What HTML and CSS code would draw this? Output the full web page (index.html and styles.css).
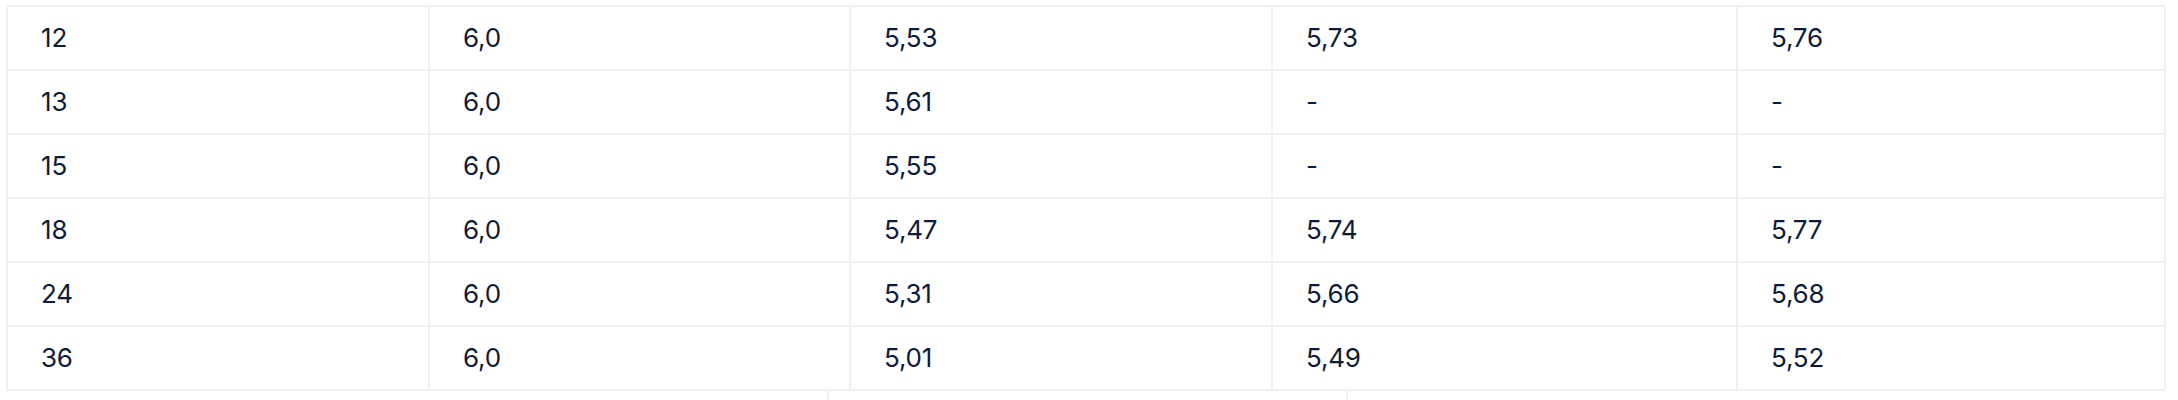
FILE: index.html
```html
<!DOCTYPE html>
<html lang="ru">
<head>
<meta charset="utf-8">
<link rel="stylesheet" href="styles.css">
<title>Table</title>
</head>
<body>
<div class="wrap">
  <table class="rates">
    <colgroup>
      <col class="c1"><col class="c2"><col class="c3"><col class="c4"><col class="c5">
    </colgroup>
    <tbody>
      <tr><td>12</td><td>6,0</td><td>5,53</td><td>5,73</td><td>5,76</td></tr>
      <tr><td>13</td><td>6,0</td><td>5,61</td><td>-</td><td>-</td></tr>
      <tr><td>15</td><td>6,0</td><td>5,55</td><td>-</td><td>-</td></tr>
      <tr><td>18</td><td>6,0</td><td>5,47</td><td>5,74</td><td>5,77</td></tr>
      <tr><td>24</td><td>6,0</td><td>5,31</td><td>5,66</td><td>5,68</td></tr>
      <tr><td>36</td><td>6,0</td><td>5,01</td><td>5,49</td><td>5,52</td></tr>
    </tbody>
  </table>
  <div class="next">
    <div class="n1"></div>
    <div class="n2"></div>
    <div class="n3"></div>
  </div>
</div>
</body>
</html>
```
FILE: styles.css
```css
html, body {
  margin: 0;
  padding: 0;
  background: #ffffff;
}
body {
  font-family: Inter, "Noto Sans", sans-serif;
  color: #0d1b3a;
}
.wrap {
  padding: 5px 0 0 6px;
  width: 2158px;
}
.rates {
  width: 2158px;
  border-collapse: collapse;
  table-layout: fixed;
  border: 2px solid #f0f0f0;
}
.c1 { width: 422px; }
.c2 { width: 421px; }
.c3 { width: 422px; }
.c4 { width: 465px; }
.c5 { width: 428px; }
.rates td {
  height: 62px;
  padding: 0 0 0 33px;
  border: 2px solid #f0f0f0;
  font-size: 26px;
  line-height: 30px;
  vertical-align: middle;
  font-weight: 400;
  letter-spacing: -0.2px;
}
.next {
  display: flex;
  height: 20px;
}
.n1 { width: 821px; }
.n2 { width: 517px; border-left: 2px solid #f0f0f0; }
.n3 { flex: 1; border-left: 2px solid #f0f0f0; }
```
